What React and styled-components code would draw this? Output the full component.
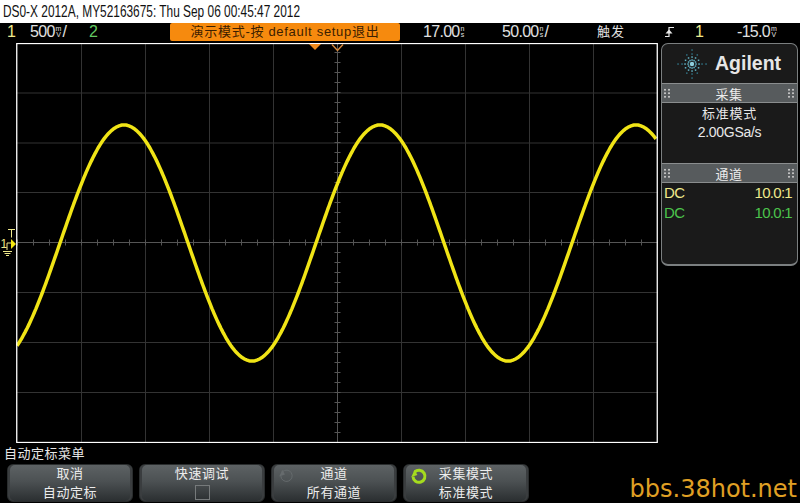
import React from "react"
import styled, { createGlobalStyle } from "styled-components"

const FONT = `"Liberation Sans", "Noto Sans CJK SC", sans-serif`

const GlobalStyle = createGlobalStyle`
  html, body {
    margin: 0;
    padding: 0;
    background: #000;
  }
  body {
    font-family: ${FONT};
    color: #e8e8e8;
  }
`

const Screen = styled.div`
  width: 800px;
  height: 503px;
  overflow: hidden;
  background: #000;
  display: flex;
  flex-direction: column;
`

const TitleBar = styled.div`
  height: 23px;
  background: #fff;
  color: #111;
  padding-left: 3px;
  white-space: nowrap;
`

const TitleText = styled.div`
  font-size: 16.5px;
  line-height: 23px;
  transform: scaleX(0.72);
  transform-origin: left center;
`

const StatusBar = styled.div`
  height: 20px;
  display: grid;
  grid-template-columns: 30px 59px 81px 230px 23px 79px 95px 68px 30px 42px 63px;
  align-items: center;
  font-size: 16px;
  letter-spacing: -0.7px;
  line-height: 18px;
  white-space: nowrap;
`

const StatusItem = styled.div`
  display: flex;
  align-items: center;
  height: 18px;
  margin-top: -2px;
  color: ${(p) => p.$color || "#e0e0e0"};
  padding-left: ${(p) => p.$indent || 0}px;
`

const Cjk = styled.span`
  font-size: 13px;
  letter-spacing: 1px;
`

const Unit = styled.span`
  display: inline-flex;
  flex-direction: column;
  align-items: center;
  font-size: 7px;
  line-height: 6px;
  letter-spacing: 0;
  margin: 0 1px;
`

const Banner = styled.div`
  height: 18px;
  margin-top: -2px;
  background: #f68a0e;
  border-radius: 2px;
  color: #3c2000;
  font-size: 13px;
  letter-spacing: 0.7px;
  line-height: 18px;
  text-align: center;
  white-space: nowrap;
`

const MainRow = styled.div`
  height: 400px;
  display: flex;
  align-items: flex-start;
  position: relative;
`

const Gutter = styled.div`
  width: 16px;
  height: 100%;
  position: relative;
`

const TriggerMark = styled.svg`
  position: absolute;
  left: 0;
  top: 184px;
`

const Plot = styled.div`
  width: 642px;
  height: 400px;
  box-sizing: border-box;
  position: relative;
`

const PlotSvg = styled.svg`
  display: block;
`

const Panel = styled.div`
  width: 137px;
  height: 223px;
  margin-left: 3px;
  box-sizing: border-box;
  background: #1a1a1a;
  border: 1px solid #7b7f80;
  border-bottom-width: 2px;
  border-radius: 7px;
  display: flex;
  flex-direction: column;
`

const Brand = styled.div`
  height: 39px;
  flex: none;
  display: flex;
  align-items: center;
  gap: 8px;
  padding-left: 15px;
  color: #e6e6e6;
  font-size: 19.5px;
  font-weight: 700;
`

const PanelBar = styled.div`
  height: 20px;
  flex: none;
  box-sizing: border-box;
  background: #575b5d;
  border-top: 1px solid #8a8d8e;
  border-bottom: 1px solid #8a8d8e;
  display: flex;
  align-items: center;
  justify-content: space-between;
  padding: 0 2px 0 1px;
  font-size: 13px;
  letter-spacing: 0.5px;
  color: #ececec;
`

const Grip = styled.span`
  width: 8px;
  height: 10.5px;
  background-image: radial-gradient(circle, #c0c0c0 0.7px, transparent 0.8px);
  background-size: 4px 3.5px;
`

const PanelBody = styled.div`
  height: ${(p) => p.$height}px;
  flex: none;
  box-sizing: border-box;
  padding-top: 2px;
  text-align: center;
  font-size: 13px;
  line-height: 18px;
  letter-spacing: 0.8px;
  color: #e8e8e8;
`

const RateLine = styled.div`
  font-size: 14px;
  letter-spacing: -0.3px;
`

const ProbeRow = styled.div`
  display: flex;
  justify-content: space-between;
  padding: 0 5px 0 2px;
  height: 20px;
  line-height: 20px;
  font-size: 15px;
  letter-spacing: -0.7px;
  color: ${(p) => p.$color};
`

const MenuTitle = styled.div`
  height: 21px;
  line-height: 21px;
  padding-left: 4px;
  font-size: 13px;
  letter-spacing: 0.5px;
  color: #e8e8e8;
`

const KeyRow = styled.div`
  height: 39px;
  padding-left: 7px;
  display: flex;
  gap: 6px;
  align-items: flex-start;
`

const SoftKey = styled.div`
  width: 126px;
  height: 38px;
  box-sizing: border-box;
  position: relative;
  border-radius: 6px;
  border: 1px solid #2a2d2e;
  background: linear-gradient(#5d6264 0%, #4c5153 45%, #2b2f31 100%);
  box-shadow: inset 2px 0 0 #3a3d3f, inset -2px 0 0 #3a3d3f;
  display: flex;
  flex-direction: column;
  align-items: center;
  font-size: 13px;
  line-height: 19px;
  letter-spacing: 0.6px;
  color: #ececec;
  padding-bottom: 1px;
`

const KeyLabel = styled.span`
  margin-top: -1px;
  & + & {
    margin-top: 0;
  }
`

const KeyIcon = styled.svg`
  position: absolute;
  left: 6px;
  top: 2px;
`

const KeyCheck = styled.span`
  display: block;
  width: 13px;
  height: 13px;
  margin-top: 2px;
  border: 1px solid #767a7b;
`

const Watermark = styled.div`
  margin-left: auto;
  margin-right: 3px;
  margin-top: 11px;
  font-family: "DejaVu Sans", sans-serif;
  font-size: 24px;
  line-height: 28px;
  color: #e0a024;
  white-space: nowrap;
`

const range = (from, to, step) => {
  const out = []
  for (let v = from; v <= to + 0.01; v += step) out.push(v)
  return out
}

// page x/y minus plot origin (16, 43)
const V_LINES = range(65.5, 577.5, 64)
const H_LINES = [50, 100, 149.5, 199.5, 249.5, 299.5, 349.5]

const wavePath = () => {
  const pts = []
  for (let x = 1; x <= 640; x += 1) {
    const pageX = x + 16
    const y = 200 - 118 * Math.cos((2 * Math.PI * (pageX - 124)) / 256)
    pts.push(`${x},${y.toFixed(1)}`)
  }
  return `M${pts.join("L")}`
}

const PlotArea = () => (
  <PlotSvg width="642" height="400" viewBox="0 0 642 400">
    <g stroke="#333" strokeWidth="1">
      {V_LINES.map((x) => (
        <line key={x} x1={x} x2={x} y1="0" y2="400" />
      ))}
      {H_LINES.map((y) => (
        <line key={y} x1="0" x2="642" y1={y} y2={y} />
      ))}
    </g>
    <g stroke="#555" strokeWidth="1">
      <line x1="0" x2="642" y1="199.5" y2="199.5" />
      <line x1="321.5" x2="321.5" y1="0" y2="400" />
      {range(1.5, 641, 16).map((x) => (
        <line key={x} x1={x} x2={x} y1="196.5" y2="202.5" />
      ))}
      {range(9.5, 399, 10).map((y) => (
        <line key={y} x1="318.5" x2="324.5" y1={y} y2={y} />
      ))}
    </g>
    <path d={wavePath()} fill="none" stroke="#f0e416" strokeWidth="3.5" />
    <rect x="0.75" y="0.5" width="640.5" height="399" fill="none" stroke="#fff" strokeWidth="1.3" />
    <path d="M293 1h12l-6 6z" fill="#f08a1c" />
    <path d="M316 1.5l5.5 6 5.5-6" fill="none" stroke="#d98a3c" strokeWidth="1.4" />
  </PlotSvg>
)

const AgilentLogo = () => {
  const dots = []
  range(0, 330, 30).forEach((deg) => {
    const rad = (deg * Math.PI) / 180
    const radii = deg % 90 === 0 ? [4, 7, 10, 14] : deg % 60 === 0 ? [4, 7, 10.5] : [4, 7.5]
    radii.forEach((r, i) => {
      dots.push(
        <rect
          key={`${deg}-${r}`}
          x={15 + r * Math.cos(rad) - 0.7}
          y={15 + r * Math.sin(rad) - 0.7}
          width="1.5"
          height="1.5"
          fill={i < 2 ? "#63b4c6" : "#2f6f80"}
        />
      )
    })
  })
  return (
    <svg width="30" height="30" viewBox="0 0 30 30">
      <circle cx="15" cy="15" r="2.2" fill="#8fd0de" />
      {dots}
    </svg>
  )
}

const CycleIcon = ({ color, weight, size }) => (
  <KeyIcon width={size} height={size} viewBox="0 0 18 18">
    <path d="M4.6 5.2A6 6 0 1 1 3 9.5" fill="none" stroke={color} strokeWidth={weight} />
    <path d="M0.5 9h6.4L5.8 3.2z" fill={color} transform="rotate(-18 4 7)" />
  </KeyIcon>
)

const EdgeIcon = () => (
  <svg width="9" height="12" viewBox="0 0 9 12">
    <path d="M0 10.5h4V1.5h5" fill="none" stroke="#e8e8e8" strokeWidth="1.2" />
    <path d="M0.5 7.5L4 3.5l3.5 4z" fill="#e8e8e8" />
  </svg>
)

const Volts = ({ prefix }) => (
  <Unit>
    <span>{prefix}</span>
    <span>V</span>
  </Unit>
)

const Secs = () => (
  <Unit>
    <span>n</span>
    <span>s</span>
  </Unit>
)

const App = () => (
  <Screen>
    <GlobalStyle />
    <TitleBar>
      <TitleText>DS0-X 2012A, MY52163675: Thu Sep 06 00:45:47 2012</TitleText>
    </TitleBar>
    <StatusBar>
      <StatusItem $color="#efe98c" $indent={7}>1</StatusItem>
      <StatusItem>
        500
        <Volts prefix="m" />/
      </StatusItem>
      <StatusItem $color="#62c862">2</StatusItem>
      <Banner>演示模式-按 default setup退出</Banner>
      <span />
      <StatusItem>
        17.00
        <Secs />
      </StatusItem>
      <StatusItem>
        50.00
        <Secs />/
      </StatusItem>
      <StatusItem><Cjk>触发</Cjk></StatusItem>
      <StatusItem><EdgeIcon /></StatusItem>
      <StatusItem $color="#efe98c">1</StatusItem>
      <StatusItem>
        -15.0
        <Volts prefix="m" />
      </StatusItem>
    </StatusBar>
    <MainRow>
      <Gutter>
        <TriggerMark width="16" height="32" viewBox="0 0 16 32">
          <path d="M8 2.5h7M11.5 2.5v8" stroke="#efe98c" strokeWidth="1" fill="none" />
          <text x="0.5" y="21" fontSize="12" fill="#efe98c" fontFamily="Liberation Sans">1</text>
          <path d="M7 23v-7h4" stroke="#efe98c" strokeWidth="1" fill="none" />
          <path d="M11 12l5 5-5 5z" fill="#f3e60f" />
          <path d="M3 24.5h9M4.5 26.5h6M6 28.5h3" stroke="#efe98c" strokeWidth="1" />
        </TriggerMark>
      </Gutter>
      <Plot>
        <PlotArea />
      </Plot>
      <Panel>
        <Brand>
          <AgilentLogo />
          Agilent
        </Brand>
        <PanelBar>
          <Grip />
          采集
          <Grip />
        </PanelBar>
        <PanelBody $height={60}>
          <div>标准模式</div>
          <RateLine>2.00GSa/s</RateLine>
        </PanelBody>
        <PanelBar>
          <Grip />
          通道
          <Grip />
        </PanelBar>
        <ProbeRow $color="#efe98c">
          <span>DC</span>
          <span>10.0:1</span>
        </ProbeRow>
        <ProbeRow $color="#4cc44c">
          <span>DC</span>
          <span>10.0:1</span>
        </ProbeRow>
      </Panel>
    </MainRow>
    <MenuTitle>自动定标菜单</MenuTitle>
    <KeyRow>
      <SoftKey>
        <KeyLabel>取消</KeyLabel>
        <KeyLabel>自动定标</KeyLabel>
      </SoftKey>
      <SoftKey>
        <KeyLabel>快速调试</KeyLabel>
        <KeyCheck />
      </SoftKey>
      <SoftKey>
        <CycleIcon color="#666b6d" weight="1" size="17" />
        <KeyLabel>通道</KeyLabel>
        <KeyLabel>所有通道</KeyLabel>
      </SoftKey>
      <SoftKey>
        <CycleIcon color="#a5dc1e" weight="3" size="18" />
        <KeyLabel>采集模式</KeyLabel>
        <KeyLabel>标准模式</KeyLabel>
      </SoftKey>
      <Watermark>bbs.38hot.net</Watermark>
    </KeyRow>
  </Screen>
)

export default App
